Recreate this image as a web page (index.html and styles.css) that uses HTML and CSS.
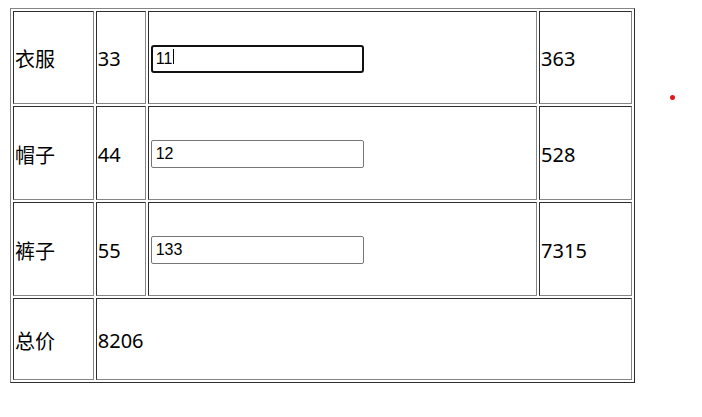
FILE: index.html
```html
<!DOCTYPE html>
<html lang="zh">
<head>
<meta charset="utf-8">
<title>购物车</title>
<link rel="stylesheet" href="styles.css">
</head>
<body>
<table class="cart">
  <tr class="row row-1">
    <td class="c-name">衣服</td>
    <td class="c-price">33</td>
    <td class="c-qty"><span class="field"><input class="qty focused" type="text" value="11"><span class="caret"></span></span></td>
    <td class="c-sum">363</td>
  </tr>
  <tr class="row row-2">
    <td class="c-name">帽子</td>
    <td class="c-price">44</td>
    <td class="c-qty"><input class="qty" type="text" value="12"></td>
    <td class="c-sum">528</td>
  </tr>
  <tr class="row row-3">
    <td class="c-name">裤子</td>
    <td class="c-price">55</td>
    <td class="c-qty"><input class="qty" type="text" value="133"></td>
    <td class="c-sum">7315</td>
  </tr>
  <tr class="row row-4">
    <td class="c-name">总价</td>
    <td class="c-total" colspan="3">8206</td>
  </tr>
</table>
<span class="dot"></span>
</body>
</html>
```
FILE: styles.css
```css
html, body {
  margin: 0;
  padding: 0;
  background: #fff;
}
body {
  padding: 8px 10px;
  font-family: "Noto Sans", "Noto Sans CJK SC", sans-serif;
  font-size: 20px;
  color: #000;
  position: relative;
  min-height: 400px;
  box-sizing: border-box;
}
.cart {
  border-collapse: separate;
  border-spacing: 2px;
  border-style: solid;
  border-width: 1px;
  border-color: #858585 #2e2e2e #2e2e2e #858585;
  width: 625px;
  box-sizing: border-box;
}
.cart td {
  padding: 2px 1px 0;
  border-style: solid;
  border-width: 1px;
  border-color: #2e2e2e #858585 #858585 #2e2e2e;
  vertical-align: middle;
  box-sizing: border-box;
}
.c-name { width: 81px; font-family: "Noto Sans CJK SC", sans-serif; }
.c-price { width: 50px; }
.c-qty { width: 390px; }
.c-sum { width: 93px; }
.row-1 td { height: 93px; }
.row-2 td { height: 94px; }
.row-3 td { height: 94px; }
.row-4 td { height: 82px; }
.cart td.c-qty { padding: 0 1px; }

.field {
  position: relative;
  display: inline-block;
  vertical-align: middle;
}
.qty {
  display: inline-block;
  vertical-align: middle;
  width: 213px;
  height: 28px;
  box-sizing: border-box;
  margin: 0 0 0 1px;
  padding: 0 4px;
  border: 1px solid #767676;
  border-radius: 2px;
  font-family: "Liberation Sans", Arial, sans-serif;
  font-size: 16px;
  color: #000;
  background: #fff;
  outline: none;
}
.qty.focused {
  border: 2px solid #111;
  border-radius: 3px;
  padding: 0 3px;
}
.caret {
  position: absolute;
  left: 23px;
  top: 6px;
  width: 1px;
  height: 15px;
  background: #000;
}
.dot {
  position: absolute;
  left: 670px;
  top: 95px;
  width: 5px;
  height: 5px;
  border-radius: 50%;
  background: #e4161b;
}
```
